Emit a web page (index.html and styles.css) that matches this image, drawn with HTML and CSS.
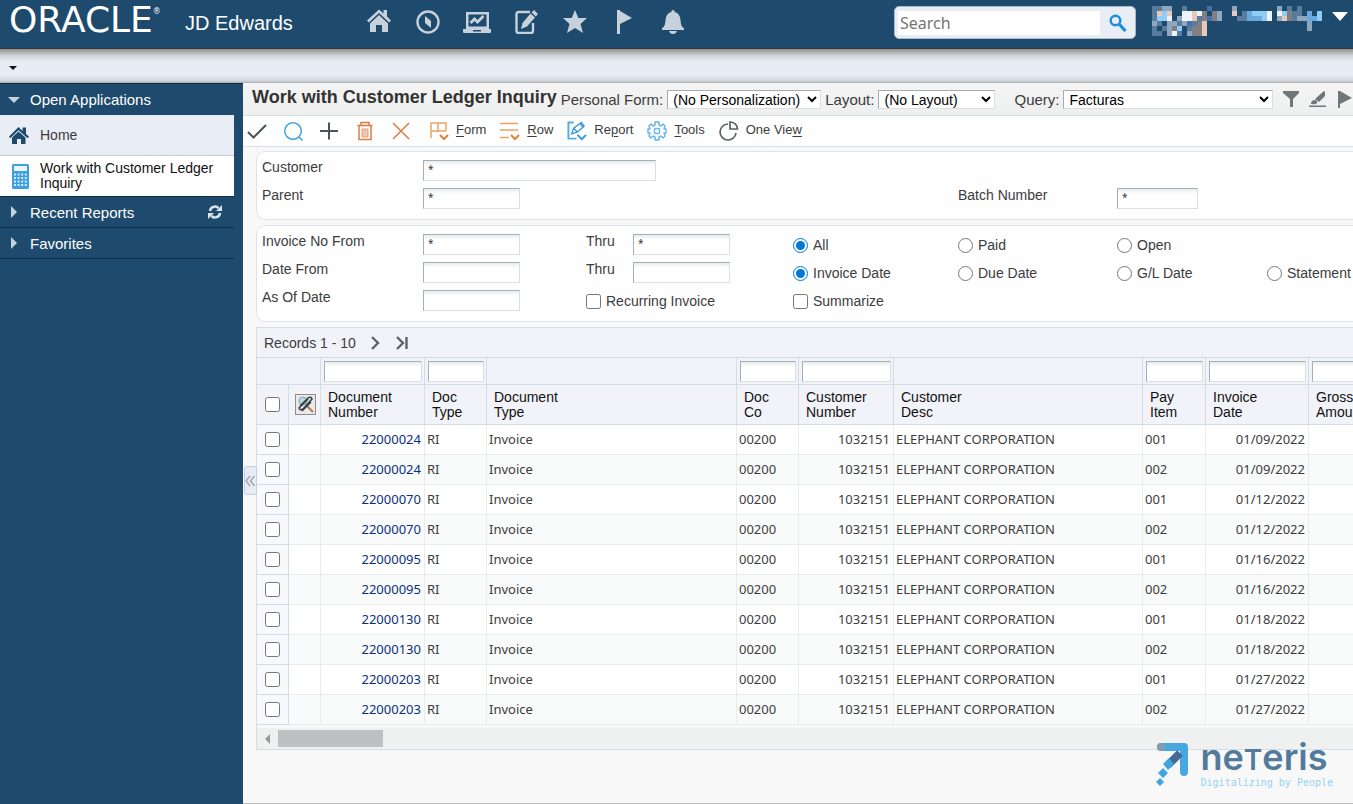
FILE: index.html
```html
<!DOCTYPE html>
<html lang="en">
<head>
    <meta charset="UTF-8">
    <meta name="viewport" content="width=device-width, initial-scale=1.0">
    <title>Work with Customer Ledger Inquiry</title>
    <link rel="stylesheet" href="styles.css">
</head>
<body>
    <header class="topbar">
        <div class="logo">ORACLE<sup>®</sup></div>
        <div class="product">JD Edwards</div>
        <nav class="top-icons">
            <a href="#" aria-label="Home"><svg viewBox="0 0 28 28"><path d="M2 14.500 14 3.500l4.500 4V4h3.500v6.500l4 4-1.800 2L14 7 3.800 16.500z"/><path d="M5 17.500 14 9l9 8.500V26h-6v-7h-6v7H5z"/></svg></a>
            <a href="#" aria-label="Navigator"><svg viewBox="0 0 28 28"><circle cx="14" cy="16" r="10.500" fill="none" stroke="currentColor" stroke-width="2.400"/><path d="M11 10l6 5v7l-6-5z"/></svg></a>
            <a href="#" aria-label="Dashboard"><svg viewBox="0 0 28 28"><path fill-rule="evenodd" d="M3 6h23v17H3zM5.500 8.500v12h18v-12zM0 23h28v3q0 1-1 1H1q-1 0-1-1zM10 24v1.500h8V24z"/><path d="M7.500 17l4-4 3 3 6-6" fill="none" stroke="currentColor" stroke-width="2.800"/></svg></a>
            <a href="#" aria-label="Edit"><svg viewBox="0 0 28 28"><path d="M18 6H6.500Q4.500 6 4.500 8v17q0 2 2 2H19q2 0 2-2v-8" fill="none" stroke="currentColor" stroke-width="2.400"/><path d="M9 23l1.500-6 8-9.500 4.500 4-8 9zM19.500 6.500l2.500-2.500 4 4-2.200 2.500z"/></svg></a>
            <a href="#" aria-label="Favorites"><svg viewBox="0 0 28 28"><path d="M14 4l3.300 8H26l-6.500 6 2.500 9-8-5-8 5 2.500-9L2 12h8.700z"/></svg></a>
            <a href="#" aria-label="Flag"><svg viewBox="0 0 28 28"><path d="M7 4h3v1l12 7-12 6v10H7z"/></svg></a>
            <a href="#" aria-label="Notifications"><svg viewBox="0 0 28 28"><path d="M12.300 6a1.700 2 0 0 1 3.400 0q5.300 1.500 5.800 8 .3 7 3.500 8v2H3v-2q3.200-1 3.500-8 .5-6.500 5.800-8zM10 25h8q-1 3-4 3t-4-3z"/></svg></a>
        </nav>
        <form class="search">
            <input type="text" placeholder="Search" aria-label="Search">
            <button type="button" aria-label="Go"><svg viewBox="0 0 18 18"><circle cx="6.500" cy="6.500" r="4.800" fill="none" stroke="#1b8ee0" stroke-width="2.400"/><path d="M10.500 10.500 16.500 17" stroke="#1b8ee0" stroke-width="3.200"/></svg></button>
        </form>
        <button type="button" class="user" aria-label="User menu">
            <svg class="user-name" viewBox="0 0 34 6" shape-rendering="crispEdges" stroke-width="1" fill="none">
                <path stroke="#587c9e" d="M0 .5h2M6 .5h1M27 .5h1M29 .5h1M0 1.500h1M18 1.500h1M28 1.500h2M0 2.500h1M9 2.500h1M17 2.500h2M28 2.500h1M1 3.500h1M5 3.500h1M8 3.500h1M0 4.500h1M2 4.500h1M7 4.500h1M0 5.500h2M5 5.500h1"/>
                <path stroke="#8ea7bf" d="M2 .5h2M16 .5h1M25 .5h1M13 1.500h1M5 2.500h1M13 2.500h1M25 2.500h1M29 2.500h2M3 3.500h2M6 3.500h1M31 3.500h1M0 3.500h1M3 4.500h1M3 5.500h1M7 5.500h1M31 4.500h1"/>
                <path stroke="#e7c9ba" d="M1 1.500h1M3 1.500h1M8 1.500h1M16 1.500h1M8 2.500h1M26 2.500h1M10 3.500h1M10 4.500h1M10 5.500h1"/>
                <path stroke="#f0f3f5" d="M6 1.500h2M23 1.500h1M6 2.500h2M3 2.500h1M23 2.500h1M25 1.500h1M4 5.500h1M9 1.500h1"/>
                <path stroke="#8dcdf8" d="M1 2.500h2M2 1.500h1M20 1.500h3M26 1.500h1M33 1.500h1M22 2.500h1M33 2.500h1M5 4.500h1"/>
                <path stroke="#6ba8df" d="M19 1.500h1M19 2.500h3M31 1.500h1M31 2.500h2"/>
                <path stroke="#456fae" d="M11 .5h1M7 3.500h1M11 2.500h1"/>
                <path stroke="#827f83" d="M10 1.500h1M12 1.500h1M10 2.500h1M12 2.500h1M27 1.500h1M9 3.500h1M4 4.500h1M8 4.500h2M8 5.500h2M27 2.500h1"/>
            </svg>
            <span class="caret"></span>
        </button>
    </header>
    <div class="subbar"><button type="button" aria-label="More"></button></div>

    <div class="layout">
        <aside class="sidebar">
            <a href="#" class="side-head"><span class="arrow-down"></span>Open Applications</a>
            <a href="#" class="side-item side-home">
                <svg viewBox="0 0 20 20"><path d="M0 11.500 9.500 2l4 4V2.500H17V9l3 2.500-1.300 1.800-9.200-8-8.300 8z"/><path d="M3 12.500 9.500 6.500l7 6V19H12v-5H8v5H3z"/></svg>
                <span>Home</span>
            </a>
            <a href="#" class="side-item side-current">
                <svg viewBox="0 0 20 26"><rect x="1" y="1" width="17" height="25" rx="1.500" fill="#3d9fe0"/><rect x="3" y="3" width="13" height="5" fill="#e8f5ff"/><path d="M3 11.500h13M3 15h13M3 18.500h13M3 22h13" stroke="#d5ecfb" stroke-width="2" stroke-dasharray="2 1.600"/></svg>
                <span>Work with Customer Ledger Inquiry</span>
            </a>
            <a href="#" class="side-head"><span class="arrow-right"></span>Recent Reports
                <svg class="refresh" viewBox="0 0 14 14"><path d="M2 6a5 5 0 0 1 8.500-3M12 8a5 5 0 0 1-8.500 3" fill="none" stroke="#dbe4ed" stroke-width="2.500"/><path d="M14 0v6H8zM0 14V8h6z" fill="#dbe4ed"/></svg>
            </a>
            <a href="#" class="side-head"><span class="arrow-right"></span>Favorites</a>
        </aside>

        <main class="main">
            <div class="titlebar">
                <h1>Work with Customer Ledger Inquiry</h1>
                <label for="personalForm">Personal Form:</label>
                <select id="personalForm" class="select-form"><option>(No Personalization)</option></select>
                <label for="layoutName">Layout:</label>
                <select id="layoutName" class="select-layout"><option>(No Layout)</option></select>
                <label for="query" class="query-label">Query:</label>
                <select id="query" class="select-query"><option>Facturas</option></select>
                <button type="button" aria-label="Filter"><svg viewBox="0 0 18 18"><path d="M1 1h16v2l-6 6v8H8V9L1 3z"/></svg></button>
                <button type="button" aria-label="Edit query"><svg viewBox="0 0 18 18"><path d="M6 9l9-8 1 1v4l-6 6zM2 14q0-4 4-4 3 1 2 3-1 2-6 1zM0 15.500h17V17H0z"/></svg></button>
                <button type="button" aria-label="Run query"><svg viewBox="0 0 18 18"><path d="M2 1h2l12 7-12 6v4H2z"/></svg></button>
            </div>

            <div class="toolbar">
                <button type="button" aria-label="Select"><svg viewBox="0 0 20 20"><path d="M1 11l5.500 5.500L19 4" stroke="#4b5557" stroke-width="2"/></svg></button>
                <button type="button" aria-label="Find"><svg viewBox="0 0 20 20"><circle cx="10" cy="10" r="8.300" stroke="#42a1e4"/><path d="M16 16l3.500 3.500" stroke="#42a1e4"/></svg></button>
                <button type="button" aria-label="Add"><svg viewBox="0 0 20 20"><path d="M10 1.500v17M1 10h18" stroke="#4b5557" stroke-width="2"/></svg></button>
                <button type="button" aria-label="Delete"><svg viewBox="0 0 20 20"><path d="M2.500 4.500h15M6 4V1.500h8V4M4 5v13.500h12V5" stroke="#dd7c42"/><path d="M7 8h6v8H7z" fill="#edc7b1" stroke="#dda17d" stroke-width="1"/></svg></button>
                <button type="button" aria-label="Close"><svg viewBox="0 0 20 20"><path d="M2 2l16 16M18 2 2 18" stroke="#dd7843"/></svg></button>
                <div class="menus">
                    <button type="button" class="menu-btn"><svg viewBox="0 0 20 20"><path d="M2 17V2h15v8M9 2v9M2 10h15" stroke="#eca563"/><path d="M11 14l4 4 4-4" stroke="#dc823a" stroke-width="2"/></svg><span><u>F</u>orm</span></button>
                    <button type="button" class="menu-btn"><svg viewBox="0 0 20 20"><path d="M0 2.500h18M0 9h18M0 16.500h9" stroke="#eca267"/><path d="M11 14l4 4 4-4" stroke="#dc823a" stroke-width="2"/></svg><span><u>R</u>ow</span></button>
                    <button type="button" class="menu-btn"><svg viewBox="0 0 21 20"><path d="M7 1H1.500v17H10" stroke="#58aae4" stroke-width="2"/><path d="M5 13l2-6 8-6 3 4-7 6zM7 7l4 4M14 3l3 3" stroke="#3c98d8"/><path d="M11 14l4.500 4.500L20 14" stroke="#3097dc" stroke-width="2"/></svg><span>Re<u>p</u>ort</span></button>
                    <button type="button" class="menu-btn"><svg viewBox="0 0 20 20"><path d="M8 1h4v3l2 1 2-2 2 2-1 3h2v4h-2l1 3-2 2-2-2-2 1v3H8v-3l-2-1-2 2-2-2 1-3H1V8h2L2 5l2-2 2 2 2-1z" stroke="#6bb4ea" stroke-linejoin="round"/><rect x="7.500" y="7.500" width="5" height="5" rx="1" stroke="#6bb4ea"/></svg><span><u>T</u>ools</span></button>
                    <button type="button" class="menu-btn"><svg viewBox="0 0 20 20"><path d="M9 3a8 8 0 1 0 8 9M11 1v7h7.500Q18 1.500 11 1z" stroke="#596062" stroke-width="1.700"/></svg><span>One Vie<u>w</u></span></button>
                </div>
            </div>

            <div class="content">
                <section class="panel">
                    <label for="customer">Customer</label>
                    <input type="text" id="customer" class="wide" value="*">
                    <label for="parent" class="row-start">Parent</label>
                    <input type="text" id="parent" value="*">
                    <label for="batch" class="batch-label">Batch Number</label>
                    <input type="text" id="batch" class="short" value="*">
                </section>

                <section class="panel">
                    <label for="invoiceFrom">Invoice No From</label>
                    <input type="text" id="invoiceFrom" value="*">
                    <label for="invoiceThru">Thru</label>
                    <input type="text" id="invoiceThru" value="*">
                    <label class="option"><input type="radio" name="status" checked>All</label>
                    <label class="option"><input type="radio" name="status">Paid</label>
                    <label class="option"><input type="radio" name="status">Open</label>

                    <label for="dateFrom" class="row-start">Date From</label>
                    <input type="text" id="dateFrom">
                    <label for="dateThru">Thru</label>
                    <input type="text" id="dateThru">
                    <label class="option"><input type="radio" name="dateType" checked>Invoice Date</label>
                    <label class="option"><input type="radio" name="dateType">Due Date</label>
                    <label class="option"><input type="radio" name="dateType">G/L Date</label>
                    <label class="option"><input type="radio" name="dateType">Statement</label>

                    <label for="asOf" class="row-start">As Of Date</label>
                    <input type="text" id="asOf">
                    <label class="option span-two"><input type="checkbox">Recurring Invoice</label>
                    <label class="option"><input type="checkbox">Summarize</label>
                </section>

                <section class="grid">
                    <div class="records">
                        <span>Records 1 - 10</span>
                        <button type="button" aria-label="Next"><svg viewBox="0 0 12 14"><path d="M2 1l6 6-6 6"/></svg></button>
                        <button type="button" aria-label="Last"><svg viewBox="0 0 12 14"><path d="M1 1l6 6-6 6M10.500 1v12"/></svg></button>
                    </div>
                    <table>
                        <colgroup>
                            <col class="c-check"><col class="c-check"><col class="c-docno"><col class="c-type"><col class="c-doctype"><col class="c-type"><col class="c-custno"><col class="c-desc"><col class="c-item"><col class="c-date"><col class="c-docno">
                        </colgroup>
                        <thead>
                            <tr class="filters">
                                <td colspan="2"></td>
                                <td><input type="text" aria-label="Document Number"></td>
                                <td><input type="text" aria-label="Doc Type"></td>
                                <td></td>
                                <td><input type="text" aria-label="Doc Co"></td>
                                <td><input type="text" aria-label="Customer Number"></td>
                                <td></td>
                                <td><input type="text" aria-label="Pay Item"></td>
                                <td><input type="text" aria-label="Invoice Date"></td>
                                <td><input type="text" aria-label="Gross Amount"></td>
                            </tr>
                            <tr>
                                <th class="check"><input type="checkbox" aria-label="Select all"></th>
                                <th class="check"><svg class="clip" viewBox="0 0 21 21"><rect x=".5" y=".5" width="20" height="20" fill="#e9e9e9" stroke="#8e8e8e"/><circle cx="8" cy="7" r="4" fill="#b9d9ea" stroke="#8ca0aa"/><path d="M12 12l6 6" stroke="#b07a55" stroke-width="2"/><path d="M5 12 13 4q3-2 4 1L8 15q-3 2-4-1l9-9M7 17l9-9" fill="none" stroke="#39424a" stroke-width="1.600"/></svg></th>
                                <th>Document<br>Number</th>
                                <th>Doc<br>Type</th>
                                <th>Document<br>Type</th>
                                <th>Doc<br>Co</th>
                                <th>Customer<br>Number</th>
                                <th>Customer<br>Desc</th>
                                <th>Pay<br>Item</th>
                                <th>Invoice<br>Date</th>
                                <th>Gross<br>Amount</th>
                            </tr>
                        </thead>
                        <tbody id="ledgerRows">
                            <!-- Ledger rows are inserted by the script below -->
                        </tbody>
                    </table>
                    <div class="scrollbar"><span class="scroll-arrow"></span><span class="scroll-thumb"></span></div>
                </section>
            </div>
            <button type="button" class="collapse" aria-label="Collapse sidebar"><svg viewBox="0 0 10 12"><path d="M5 1 1 6l4 5M9.500 1l-4 5 4 5"/></svg></button>
            <div class="watermark">
                <svg viewBox="0 0 36 52"><path d="M5 6h23v25" fill="none" stroke="#47a8e0" stroke-width="8" stroke-linecap="round" stroke-linejoin="round"/><circle cx="5" cy="6" r="4" fill="#8799ad"/><path d="M12 24l12-12" stroke="#456894" stroke-width="8"/><path d="M7 23l6-6 5 6-6 6zM2 32l5-5 5 5-5 5zM0 41l4-4 4 4-4 4z" fill="#3fa4e2"/></svg>
                <div>
                    <div class="brand">ne<span>T</span>eris</div>
                    <div class="tagline">Digitalizing by People</div>
                </div>
            </div>
        </main>
    </div>
    <script>
        const invoices = [
            ['22000024', '01/09/2022'],
            ['22000070', '01/12/2022'],
            ['22000095', '01/16/2022'],
            ['22000130', '01/18/2022'],
            ['22000203', '01/27/2022']
        ];
        const tableBody = document.getElementById('ledgerRows');

        invoices.forEach(([number, date]) => {
            ['001', '002'].forEach(item => {
                const row = document.createElement('tr');
                row.innerHTML = `
                    <td class="check"><input type="checkbox" aria-label="Select ${number} ${item}"></td>
                    <td></td>
                    <td class="number"><a href="#">${number}</a></td>
                    <td>RI</td>
                    <td>Invoice</td>
                    <td>00200</td>
                    <td class="number">1032151</td>
                    <td>ELEPHANT CORPORATION</td>
                    <td>${item}</td>
                    <td class="number">${date}</td>
                    <td></td>
                `;
                tableBody.appendChild(row);
            });
        });
    </script>
</body>
</html>
```
FILE: styles.css
```css
* {
    box-sizing: border-box;
}
body {
    margin: 0;
    height: 100vh;
    display: flex;
    flex-direction: column;
    overflow: hidden;
    font-family: "Liberation Sans", Arial, sans-serif;
    font-size: 14px;
    color: #3c3c3c;
    background: #f8f8f8;
}
a {
    color: inherit;
    text-decoration: none;
}
button {
    padding: 0;
    border: none;
    background: none;
    color: inherit;
    font: inherit;
    cursor: pointer;
}
svg {
    display: block;
    flex-shrink: 0;
}

/* Header */
.topbar {
    display: flex;
    align-items: flex-start;
    flex-shrink: 0;
    height: 49px;
    background: #1e4a6d;
    border-bottom: 1px solid #333;
    color: #fff;
}
.logo {
    width: 185px;
    padding-left: 9px;
    font-family: "DejaVu Sans", sans-serif;
    font-size: 36px;
    line-height: 40px;
    white-space: nowrap;
}
.logo sup {
    font-size: 8px;
    line-height: 8px;
    vertical-align: 18px;
}
.product {
    width: 180px;
    font-size: 20px;
    line-height: 46px;
}
.top-icons {
    display: flex;
    gap: 21px;
    padding-top: 6px;
    color: #c7d1dc;
}
.top-icons svg {
    width: 28px;
    height: 28px;
    fill: currentColor;
}
.search {
    display: flex;
    align-items: center;
    width: 242px;
    height: 33px;
    margin: 6px 16px 0 auto;
    padding: 0 3px;
    background: #e9eef6;
    border: 1px solid #a9bac9;
    border-radius: 5px;
}
.search input {
    flex: 1;
    min-width: 0;
    height: 24px;
    padding: 0 2px;
    border: none;
    font-family: "Noto Sans", sans-serif;
    font-size: 16px;
}
.search button {
    padding: 0 5px 0 9px;
}
.search svg {
    width: 18px;
    height: 18px;
}
.user {
    display: flex;
    gap: 10px;
    margin: 6px 5px 0 0;
}
.user-name {
    width: 170px;
    height: 30px;
}
.caret {
    margin-top: 6px;
    border: 8px solid transparent;
    border-top: 9px solid #fff;
    border-bottom: none;
}
.subbar {
    flex-shrink: 0;
    height: 34px;
    padding: 17px 9px 0;
    background: linear-gradient(#8f9192, #d3d8dd 7px, #e8edf5 13px, #e8edf5 26px, #d0d5da 32px, #a8abae);
}
.subbar button {
    display: block;
    border: 4px solid transparent;
    border-top-color: #111;
    border-bottom: none;
}

/* Sidebar */
.layout {
    display: flex;
    flex: 1;
    min-height: 0;
}
.sidebar {
    flex-shrink: 0;
    width: 243px;
    padding-right: 9px;
    background: #1e4a6d;
    border-top: 1px solid #0d2d48;
}
.side-head {
    display: flex;
    align-items: center;
    height: 31px;
    padding-right: 12px;
    color: #fff;
    font-size: 15px;
}
.side-current ~ .side-head {
    border-bottom: 1px solid #0d2d48;
}
.arrow-down {
    margin: 0 10px 0 8px;
    border: 6px solid transparent;
    border-top-color: #c7d1dc;
    border-bottom: none;
}
.arrow-right {
    margin: 0 13px 0 11px;
    border: 6px solid transparent;
    border-left-color: #c7d1dc;
    border-right: none;
}
.refresh {
    width: 14px;
    height: 14px;
    margin-left: auto;
}
.side-item {
    display: flex;
    align-items: center;
    height: 40px;
    padding-left: 9px;
    gap: 11px;
    line-height: 15px;
}
.side-item svg {
    width: 20px;
}
.side-home {
    height: 41px;
    background: #e9eef6;
    border-bottom: 1px solid #c4cad5;
}
.side-home svg {
    height: 20px;
    fill: #1e4a6d;
}
.side-current {
    height: 41px;
    padding-left: 11px;
    gap: 9px;
    background: #fff;
    color: #111;
    border-bottom: 1px solid #0d2d48;
}
.side-current svg {
    height: 26px;
}

/* Title and toolbar */
.main {
    position: relative;
    flex: 1;
    min-width: 0;
    overflow: hidden;
    border-bottom: 1px solid #bbb;
}
.titlebar {
    display: flex;
    align-items: center;
    gap: 4px;
    height: 33px;
    padding-left: 9px;
    background: linear-gradient(#f4f4f4, #eeefef);
    border-bottom: 1px solid #d7dfe5;
    white-space: nowrap;
}
.titlebar h1 {
    margin: 0 0 3px;
    font-size: 18px;
    color: #333;
}
.titlebar label {
    font-size: 15px;
}
.titlebar select {
    flex-shrink: 0;
    height: 19px;
    padding: 0 1px;
    border: 1px solid #d9dfe3;
    border-top-color: #a5adb5;
    border-left-color: #a5adb5;
    border-radius: 0;
    background-color: #fff;
    color: #000;
    font: inherit;
}
.titlebar .select-form {
    width: 154px;
}
.titlebar .select-layout {
    width: 117px;
}
.titlebar .select-query {
    width: 210px;
}
.titlebar .query-label {
    margin-left: 15px;
}
.titlebar button {
    margin-left: 5px;
}
.titlebar svg {
    width: 18px;
    height: 18px;
    fill: #707778;
}
.toolbar {
    display: flex;
    align-items: center;
    gap: 16px;
    height: 31px;
    padding-left: 4px;
    background: #fefefe;
    border-bottom: 1px solid #d7dfe8;
    font-size: 13px;
    white-space: nowrap;
}
.toolbar svg {
    width: 20px;
    height: 20px;
    fill: none;
    stroke-width: 1.5;
}
.menus {
    display: flex;
    gap: 14px;
    padding-left: 2px;
}
.menu-btn {
    display: flex;
    align-items: center;
    gap: 7px;
}
.menu-btn span {
    margin-bottom: 4px;
}
.menu-btn u {
    text-underline-offset: 2px;
}

/* Filter form */
.content {
    padding: 4px 0 0 13px;
}
.panel {
    display: grid;
    grid-template-columns: 161px 163px 47px 160px 165px 159px 150px 1fr;
    grid-auto-rows: 28px;
    margin-bottom: 5px;
    padding: 5px 0 6px 5px;
    background: #fefefe;
    border: 1px solid #dfe3e9;
    border-right: none;
    border-radius: 9px 0 0 9px;
    white-space: nowrap;
}
.panel label {
    padding-top: 2px;
    line-height: 16px;
}
.row-start {
    grid-column: 1;
}
.batch-label {
    grid-column: 6;
}
input[type="text"] {
    border-radius: 0;
}
.panel input[type="text"],
.filters input {
    height: 21px;
    padding: 0 4px 3px;
    border: 1px solid #d9dfe3;
    border-top-color: #a5adb5;
    border-left-color: #a5adb5;
    background: linear-gradient(#e9ecec, #fff 5px);
    color: #333;
    font-family: "Noto Sans", sans-serif;
    font-size: 10px;
}
.panel input[type="text"] {
    width: 97px;
    margin-top: 3px;
}
.panel input.wide {
    width: 233px;
}
.panel input.short {
    width: 81px;
}
input[type="radio"],
input[type="checkbox"] {
    width: 15px;
    height: 15px;
    margin: 0;
    accent-color: #0078d7;
}
.panel .option {
    display: flex;
    align-items: center;
    gap: 5px;
    height: 28px;
    padding-top: 0;
}
.span-two {
    grid-column: span 2;
}

/* Records grid */
.grid {
    background: #f8f8f8;
    border: 1px solid #d3dde6;
    border-right: none;
    overflow: hidden;
}
.records {
    display: flex;
    align-items: center;
    gap: 14px;
    height: 29px;
    padding-left: 7px;
    background: #f1f3f8;
}
.records svg {
    width: 12px;
    height: 14px;
    fill: none;
    stroke: #5f6365;
    stroke-width: 2.4;
}
table {
    width: 1156px;
    table-layout: fixed;
    border-collapse: separate;
    border-spacing: 0;
}
.c-check { width: 32px; }
.c-docno { width: 104px; }
.c-type { width: 62px; }
.c-doctype { width: 250px; }
.c-custno { width: 95px; }
.c-desc { width: 249px; }
.c-item { width: 63px; }
.c-date { width: 103px; }
thead td,
thead th {
    background: #f1f3f8;
    border-top: 1px solid #d3dde6;
    border-right: 1px solid #d3dde6;
}
.filters td {
    height: 27px;
    padding: 0 2px 0 3px;
}
.filters input {
    display: block;
    width: 100%;
}
thead th {
    height: 41px;
    padding: 0 7px;
    border-bottom: 1px solid #d3dde6;
    color: #111;
    font-weight: normal;
    line-height: 15px;
    text-align: left;
}
tbody td {
    height: 30px;
    padding: 0 3px 2px 2px;
    background: #fff;
    border-right: 1px solid #e9ecec;
    border-bottom: 1px solid #e9ecec;
    font-family: "Noto Sans", sans-serif;
    font-size: 13px;
    line-height: 18px;
}
tbody tr:nth-child(even) td {
    background: #f9fbfa;
}
tbody td.number {
    text-align: right;
}
tbody a {
    color: #0a2f80;
}
tbody td.check,
tbody tr:nth-child(even) td.check {
    background: #f8f9fd;
    border-color: #d3dde6;
}
.check input {
    display: block;
}
thead .check,
tbody .check {
    padding: 0 0 0 8px;
}
thead .check + .check {
    padding-left: 6px;
}
.clip {
    width: 21px;
    height: 21px;
}
.scrollbar {
    display: flex;
    align-items: center;
    height: 21px;
    margin-top: 3px;
    padding-left: 8px;
    background: #eff1f1;
}
.scroll-arrow {
    border: 5px solid transparent;
    border-right-color: #999;
    border-left: none;
}
.scroll-thumb {
    width: 105px;
    height: 17px;
    margin-left: 8px;
    background: #bfc0c2;
}
.collapse {
    position: absolute;
    top: 383px;
    left: 1px;
    width: 13px;
    height: 29px;
    background: #e6ebf4;
    border: 1px solid #c3cfdc;
    border-radius: 3px;
}
.collapse svg {
    width: 10px;
    height: 12px;
    fill: none;
    stroke: #a3a7ab;
    stroke-width: 1.4;
}
.watermark {
    position: absolute;
    right: 20px;
    bottom: 10px;
    display: flex;
    gap: 9px;
}
.watermark svg {
    width: 36px;
    height: 52px;
}
.brand {
    color: #527a9b;
    font-family: Inter, sans-serif;
    font-size: 36px;
    font-weight: 600;
    line-height: 32px;
}
.brand span {
    font-size: 28px;
}
.tagline {
    margin-top: 2px;
    color: #96d3f2;
    font-family: "DejaVu Sans Mono", monospace;
    font-size: 10px;
    line-height: 10px;
}
```
